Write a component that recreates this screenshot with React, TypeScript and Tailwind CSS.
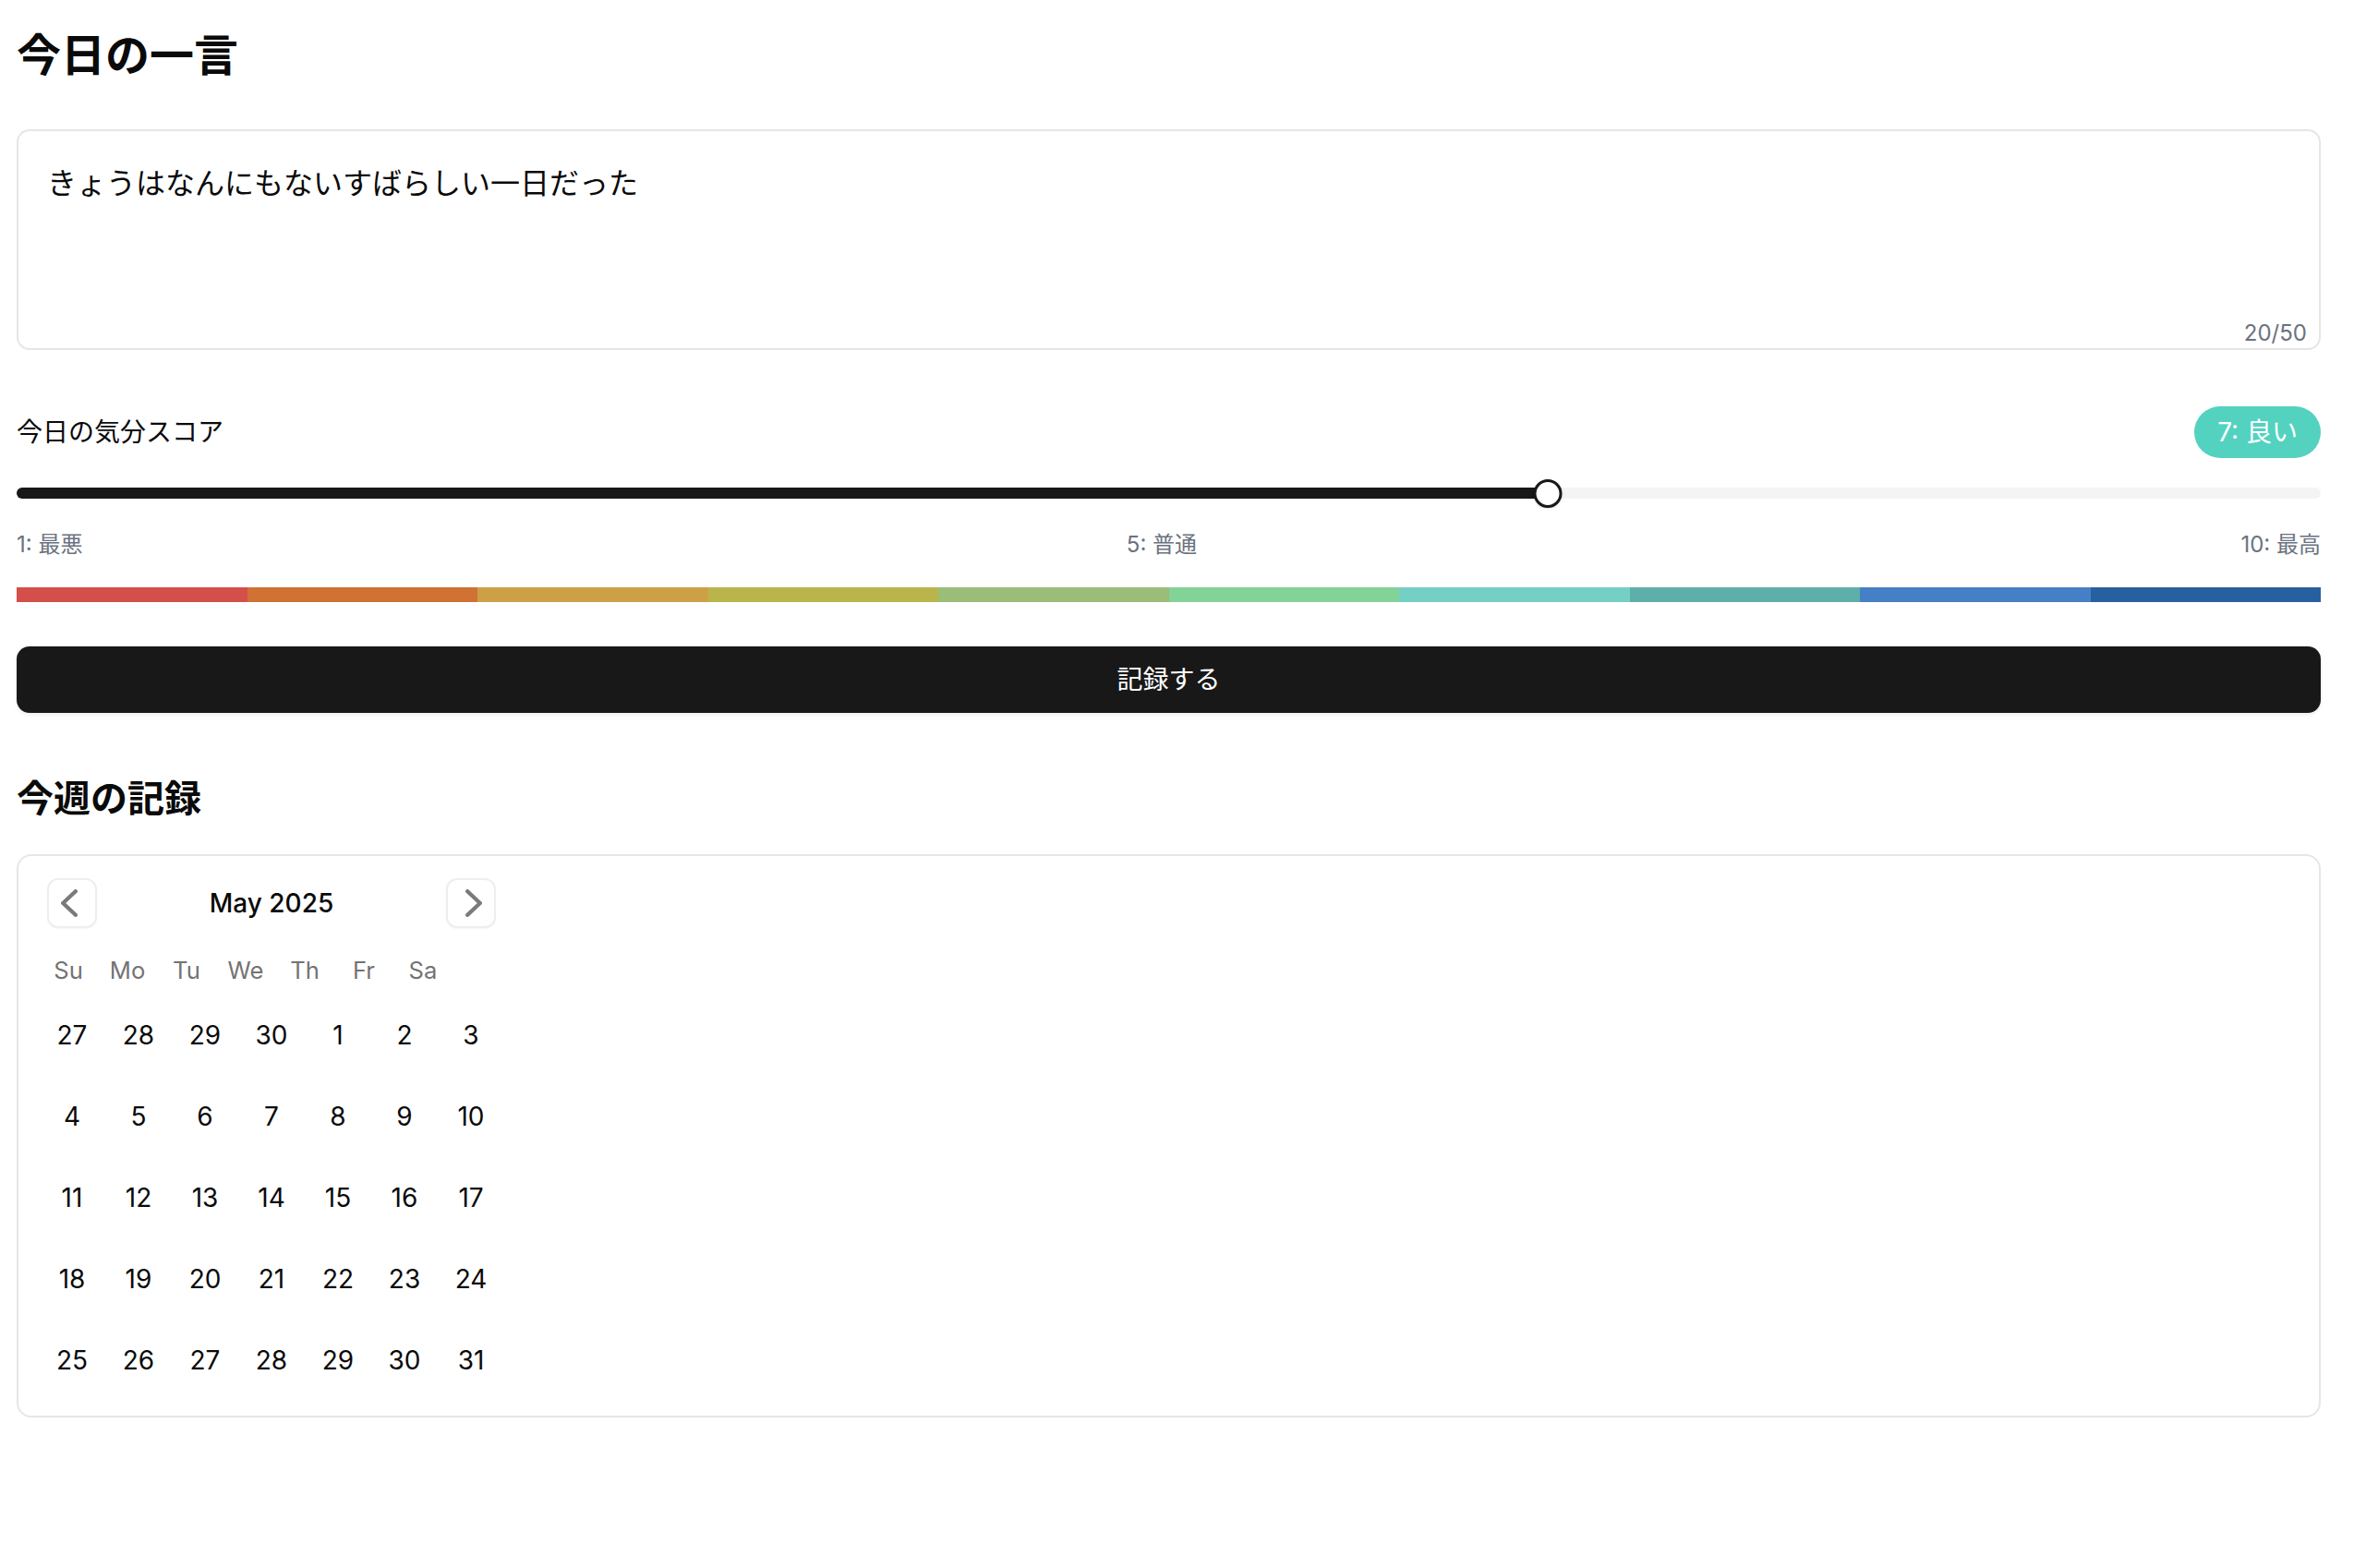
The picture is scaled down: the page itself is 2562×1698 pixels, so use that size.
import { useState } from "react";

const MOOD_LABELS: Record<number, string> = {
  1: "最悪",
  2: "とても悪い",
  3: "悪い",
  4: "やや悪い",
  5: "普通",
  6: "やや良い",
  7: "良い",
  8: "とても良い",
  9: "最高に近い",
  10: "最高",
};

const SCALE_COLORS = [
  "bg-[#d44f4a]",
  "bg-[#cf7234]",
  "bg-[#cda045]",
  "bg-[#bab54a]",
  "bg-[#9bbd77]",
  "bg-[#83d298]",
  "bg-[#74cfc5]",
  "bg-[#5eafaa]",
  "bg-[#457fc6]",
  "bg-[#27609e]",
];

const WEEKDAYS = ["Su", "Mo", "Tu", "We", "Th", "Fr", "Sa"];

const WEEKS = [
  [27, 28, 29, 30, 1, 2, 3],
  [4, 5, 6, 7, 8, 9, 10],
  [11, 12, 13, 14, 15, 16, 17],
  [18, 19, 20, 21, 22, 23, 24],
  [25, 26, 27, 28, 29, 30, 31],
];

function Chevron({ dir }: { dir: "left" | "right" }) {
  return (
    <svg width="18" height="30" viewBox="0 0 18 30" fill="none">
      <polyline
        points={dir === "left" ? "15.8,2.2 2.2,15 15.8,27.8" : "2.2,2.2 15.8,15 2.2,27.8"}
        stroke="#7a7a7a"
        strokeWidth="4.3"
        strokeLinecap="round"
        strokeLinejoin="round"
      />
    </svg>
  );
}

function Calendar() {
  return (
    <div className="w-[504px]">
      {/* month nav */}
      <div className="relative flex h-[54px] items-center justify-center">
        <button className="absolute left-[9px] top-0 flex h-[54px] w-[54px] items-center justify-center rounded-[12px] border-2 border-[#eeeeee] bg-white shadow-[0_1px_2px_rgba(0,0,0,0.04)]">
          <span className="-ml-[6px] flex">
            <Chevron dir="left" />
          </span>
        </button>
        <span className="text-[28px] font-medium">May 2025</span>
        <button className="absolute right-[9px] top-0 flex h-[54px] w-[54px] items-center justify-center rounded-[12px] border-2 border-[#eeeeee] bg-white shadow-[0_1px_2px_rgba(0,0,0,0.04)]">
          <span className="ml-[6px] flex">
            <Chevron dir="right" />
          </span>
        </button>
      </div>

      {/* weekday header */}
      <div className="mt-[28px] flex h-[36px] items-center">
        {WEEKDAYS.map((d) => (
          <div key={d} className="w-[64px] text-center text-[25.6px] text-[#737373]">
            {d}
          </div>
        ))}
      </div>

      {/* days */}
      <div className="mt-[16px] flex flex-col gap-[16px]">
        {WEEKS.map((week, i) => (
          <div key={i} className="flex">
            {week.map((day, j) => (
              <div key={j} className="flex h-[72px] w-[72px] items-center justify-center text-[28px]">
                {day}
              </div>
            ))}
          </div>
        ))}
      </div>
    </div>
  );
}

export default function App() {
  const [text, setText] = useState("きょうはなんにもないすばらしい一日だった");
  const [mood] = useState(7);

  const pct = ((mood - 1) / 9) * 100;
  // thumb stays inside the track like radix does
  const offset = 16 - (pct / 50) * 16;

  return (
    <main className="min-h-screen bg-white pb-[40px] pl-[18px] pr-[49px] pt-[28px] font-['Inter','Noto_Sans_CJK_JP',sans-serif] text-[#0a0a0a]">
      <h1 className="text-[48px] font-bold leading-[64px]">今日の一言</h1>

      {/* 一言 */}
      <div className="relative mt-[48px] h-[239px] rounded-[14px] border-2 border-[#e6e6e6]">
        <textarea
          value={text}
          maxLength={50}
          onChange={(e) => setText(e.target.value)}
          className="h-full w-full resize-none bg-transparent px-[31px] pt-[33px] font-['Inter','Noto_Sans_CJK_JP',sans-serif] text-[32px] leading-[48px] outline-none"
        />
        <span className="absolute bottom-0 right-[13px] text-[24px] leading-[32px] text-[#6b7280]">
          {text.length}/50
        </span>
      </div>

      {/* 気分スコア */}
      <div className="mt-[61px] flex items-center justify-between">
        <span className="text-[28px]">今日の気分スコア</span>
        <span className="flex h-[56px] items-center rounded-full bg-[#53d2c0] px-[25px] text-[28px] text-white">
          {mood}: {MOOD_LABELS[mood]}
        </span>
      </div>

      <div className="relative mt-[22px] h-[32px]">
        <div className="absolute inset-x-0 top-[10px] h-[12px] overflow-hidden rounded-full bg-[#f4f4f4]">
          <div className="h-full bg-[#181818]" style={{ width: `${pct}%` }} />
        </div>
        <div
          className="absolute top-[1px] h-[31px] w-[31px] -translate-x-1/2 rounded-full border-[3px] border-[#181818] bg-white shadow-[0_1px_3px_rgba(0,0,0,0.12)]"
          style={{ left: `calc(${pct}% + ${offset}px)` }}
        />
      </div>

      <div className="mt-[24px] flex justify-between text-[24px] leading-[32px] text-[#6b7280]">
        <span>1: 最悪</span>
        <span>5: 普通</span>
        <span>10: 最高</span>
      </div>

      <div className="mt-[30px] flex h-[16px]">
        {SCALE_COLORS.map((c) => (
          <div key={c} className={`flex-1 ${c}`} />
        ))}
      </div>

      <button className="mt-[48px] flex h-[72px] w-full items-center justify-center rounded-[14px] bg-[#181818] text-[28px] text-white shadow-[0_2px_4px_rgba(0,0,0,0.08)]">
        記録する
      </button>

      <h2 className="mt-[65px] text-[40px] font-bold leading-[56px]">今週の記録</h2>

      <div className="mt-[32px] rounded-[16px] border-2 border-[#e6e6e6] py-[24px] pl-[22px] pr-[24px]">
        <Calendar />
      </div>
    </main>
  );
}
